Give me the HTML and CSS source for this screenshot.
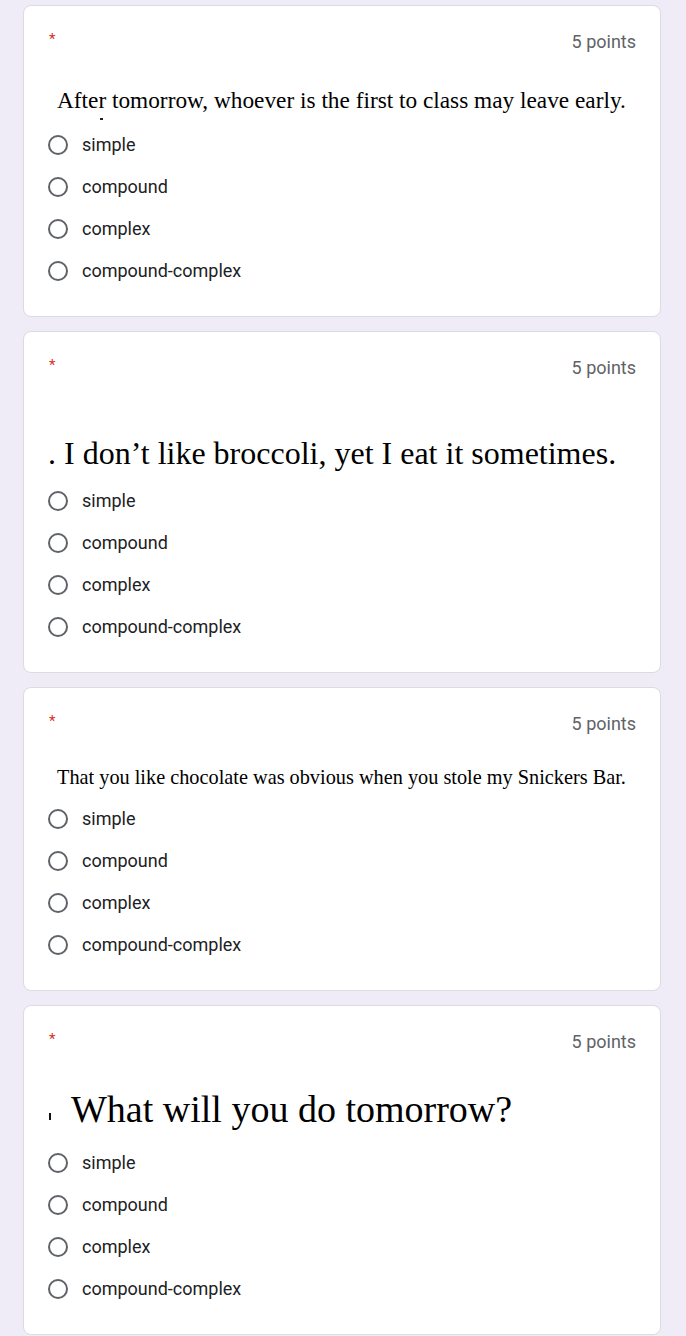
FILE: index.html
```html
<!DOCTYPE html>
<html lang="en">
<head>
<meta charset="utf-8">
<title>Quiz</title>
<link rel="stylesheet" href="styles.css">
</head>
<body>
<main class="form">
  <section class="card">
    <div class="card-head"><span class="req">*</span><span class="points">5 points</span></div>
    <div class="question q1"><span class="qtext">After tomorrow, whoever is the first to class may leave early.</span><span class="tick tick-q1"></span></div>
    <ul class="options">
      <li class="option"><span class="radio"></span><span class="label">simple</span></li>
      <li class="option"><span class="radio"></span><span class="label">compound</span></li>
      <li class="option"><span class="radio"></span><span class="label">complex</span></li>
      <li class="option"><span class="radio"></span><span class="label">compound-complex</span></li>
    </ul>
  </section>
  <section class="card">
    <div class="card-head"><span class="req">*</span><span class="points">5 points</span></div>
    <div class="question q2"><span class="qtext">. I don’t like broccoli, yet I eat it sometimes.</span></div>
    <ul class="options">
      <li class="option"><span class="radio"></span><span class="label">simple</span></li>
      <li class="option"><span class="radio"></span><span class="label">compound</span></li>
      <li class="option"><span class="radio"></span><span class="label">complex</span></li>
      <li class="option"><span class="radio"></span><span class="label">compound-complex</span></li>
    </ul>
  </section>
  <section class="card">
    <div class="card-head"><span class="req">*</span><span class="points">5 points</span></div>
    <div class="question q3"><span class="qtext">That you like chocolate was obvious when you stole my Snickers Bar.</span></div>
    <ul class="options">
      <li class="option"><span class="radio"></span><span class="label">simple</span></li>
      <li class="option"><span class="radio"></span><span class="label">compound</span></li>
      <li class="option"><span class="radio"></span><span class="label">complex</span></li>
      <li class="option"><span class="radio"></span><span class="label">compound-complex</span></li>
    </ul>
  </section>
  <section class="card">
    <div class="card-head"><span class="req">*</span><span class="points">5 points</span></div>
    <div class="question q4"><span class="mark"></span><span class="qtext">What will you do tomorrow?</span></div>
    <ul class="options">
      <li class="option"><span class="radio"></span><span class="label">simple</span></li>
      <li class="option"><span class="radio"></span><span class="label">compound</span></li>
      <li class="option"><span class="radio"></span><span class="label">complex</span></li>
      <li class="option"><span class="radio"></span><span class="label">compound-complex</span></li>
    </ul>
  </section>
</main>
</body>
</html>
```
FILE: styles.css
```css
* { box-sizing: border-box; }
html, body { margin: 0; padding: 0; }
body {
  background: #efebf7;
  font-family: Roboto, "Liberation Sans", Arial, sans-serif;
  color: #202124;
}
.form {
  display: flex;
  flex-direction: column;
  gap: 14px;
  padding: 5px 0 0 23px;
  width: 661px;
}
.card {
  background: #fff;
  border: 1px solid #dadce0;
  border-radius: 8px;
  padding: 24px 24px 24px 24px;
}
.card-head {
  display: flex;
  justify-content: space-between;
  align-items: center;
  height: 24px;
}
.req {
  color: #d93025;
  font-size: 15px;
  line-height: 24px;
  padding-left: 1px;
  align-self: flex-start;
  margin-top: -3px;
}
.points {
  color: #5f6368;
  font-size: 18px;
  line-height: 24px;
  margin-top: -1px;
}
.question {
  position: relative;
  font-family: "Liberation Serif", "Times New Roman", serif;
  color: #000;
  white-space: nowrap;
  display: flex;
  align-items: center;
}
.q1 { height: 70px; padding: 31px 0 9px 9px; font-size: 23.3px; line-height: 30px; }
.q2 { height: 100px; padding: 53px 0 7px 0; font-size: 32px; line-height: 40px; }
.q3 { height: 62px; padding: 29px 0 9px 9px; font-size: 20.3px; line-height: 24px; }
.q4 { height: 88px; padding: 33px 0 11px 1px; font-size: 38px; line-height: 44px; }
.tick-q1 {
  position: absolute;
  left: 52px;
  top: 64px;
  width: 3px;
  height: 2px;
  background: #222;
}
.mark {
  display: inline-block;
  width: 2px;
  height: 7px;
  background: #111;
  margin: 14px 20px 0 0;
}
.options { list-style: none; margin: 0; padding: 0; }
.option {
  display: flex;
  align-items: center;
  height: 42px;
}
.radio {
  width: 20px;
  height: 20px;
  border: 2px solid #5f6368;
  border-radius: 50%;
  flex: none;
}
.label {
  margin-left: 14px;
  font-size: 18px;
  line-height: 24px;
  color: #202124;
}
```
